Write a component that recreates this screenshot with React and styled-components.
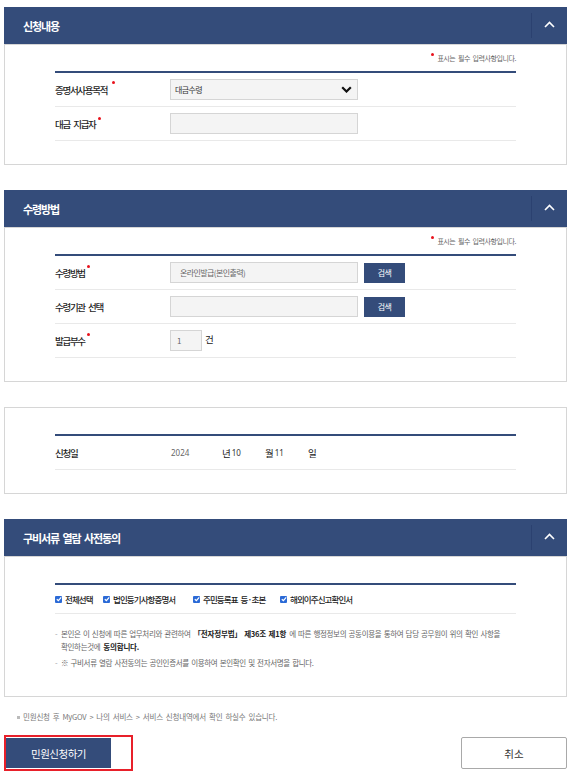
import styled, { createGlobalStyle } from "styled-components";

const GlobalStyle = createGlobalStyle`
  html, body {
    margin: 0;
    padding: 0;
    background: #fff;
  }
  body {
    font-family: "Noto Sans CJK KR", "Noto Sans", sans-serif;
    color: #222;
  }
`;

const NAVY = "#344c7a";

const ChevronUp = () => (
  <svg width="11" height="7" viewBox="0 0 11 7">
    <polyline points="1,6 5.5,1.5 10,6" fill="none" stroke="#fff" strokeWidth="1.6" />
  </svg>
);

const ChevronDown = () => (
  <svg width="11" height="7" viewBox="0 0 11 7">
    <polyline points="1.2,1.2 5.5,5.5 9.8,1.2" fill="none" stroke="#111" strokeWidth="2.2" />
  </svg>
);

const Check = () => (
  <svg width="6" height="6" viewBox="0 0 6 6">
    <polyline points="0.8,3.2 2.4,4.7 5.2,1.3" fill="none" stroke="#fff" strokeWidth="1.2" />
  </svg>
);

const Panel = ({ title, note = true, children }) => (
  <Section>
    {title && (
      <PanelHead>
        <h2>{title}</h2>
        <Toggle>
          <ChevronUp />
        </Toggle>
      </PanelHead>
    )}
    <PanelBody>
      <Required>
        {note && (
          <>
            <Dot $note />
            표시는 필수 입력사항입니다.
          </>
        )}
      </Required>
      {children}
    </PanelBody>
  </Section>
);

const App = () => {
  return (
    <Page>
      <GlobalStyle />
      <Panel title="신청내용">
        <FormTable>
          <Row>
            <Label>
              증명서사용목적 <Dot $top={-8} />
            </Label>
            <SelectBox>
              <span>대금수령</span>
              <ChevronDown />
            </SelectBox>
          </Row>
          <Row>
            <Label>
              대금 지급자<Dot $top={-6} />
            </Label>
            <Field />
          </Row>
        </FormTable>
      </Panel>

      <Panel title="수령방법">
        <FormTable>
          <Row>
            <Label>
              수령방법<Dot $top={-7} />
            </Label>
            <Field>온라인발급(본인출력)</Field>
            <SearchButton>검색</SearchButton>
          </Row>
          <Row>
            <Label>수령기관 선택</Label>
            <Field />
            <SearchButton>검색</SearchButton>
          </Row>
          <Row>
            <Label>
              발급부수<Dot $top={-7} />
            </Label>
            <Field $small>1</Field>
            <Unit>건</Unit>
          </Row>
        </FormTable>
      </Panel>

      <Panel note={false}>
        <FormTable>
          <Row>
            <Label>신청일</Label>
            <DatePart $w={52}>
              <Num>2024</Num>
            </DatePart>
            <DatePart $w={43}>
              년<Num $dark>10</Num>
            </DatePart>
            <DatePart $w={43}>
              월<Num $dark>11</Num>
            </DatePart>
            <DatePart>일</DatePart>
          </Row>
        </FormTable>
      </Panel>

      <Section>
        <PanelHead>
          <h2>구비서류 열람 사전동의</h2>
          <Toggle>
            <ChevronUp />
          </Toggle>
        </PanelHead>
        <PanelBody>
          <Required />
          <FormTable>
            <CheckRow>
              <CheckItem $w={48}>
                <Box>
                  <Check />
                </Box>
                전체선택
              </CheckItem>
              <CheckItem $w={90}>
                <Box>
                  <Check />
                </Box>
                법인등기사항증명서
              </CheckItem>
              <CheckItem $w={87}>
                <Box>
                  <Check />
                </Box>
                주민등록표 등·초본
              </CheckItem>
              <CheckItem>
                <Box>
                  <Check />
                </Box>
                해외이주신고확인서
              </CheckItem>
            </CheckRow>
          </FormTable>
          <Notes>
            <li>
              <NoteLine>
                <span>본인은 이 신청에 따른 업무처리와 관련하여</span>
                <b>「전자정부법」 제36조 제1항</b>
                <span>에 따른 행정정보의 공동이용을 통하여 담당 공무원이 위의 확인 사항을</span>
              </NoteLine>
              <NoteLine>
                <span>확인하는것에</span>
                <b>동의합니다.</b>
              </NoteLine>
            </li>
            <li>
              <NoteLine>
                <span>※ 구비서류 열람 사전동의는 공인인증서를 이용하여 본인확인 및 전자서명을 합니다.</span>
              </NoteLine>
            </li>
          </Notes>
        </PanelBody>
      </Section>

      <Guide>민원신청 후 MyGOV &gt; 나의 서비스 &gt; 서비스 신청내역에서 확인 하실수 있습니다.</Guide>

      <Actions>
        <Highlight>
          <SubmitButton>민원신청하기</SubmitButton>
        </Highlight>
        <CancelButton>취소</CancelButton>
      </Actions>
    </Page>
  );
};

const Page = styled.div`
  width: 563px;
  padding: 7px 0 0 4px;
`;

const Section = styled.section`
  margin-bottom: 25px;
`;

const PanelHead = styled.div`
  display: flex;
  align-items: center;
  height: 37px;
  background: ${NAVY};
  h2 {
    flex: 1;
    margin: 0;
    padding-left: 19px;
    color: #fff;
    font-size: 11px;
    font-weight: 700;
    letter-spacing: -1.1px;
    word-spacing: 2px;
  }
`;

const Toggle = styled.div`
  display: flex;
  align-items: center;
  justify-content: center;
  width: 35px;
  height: 25px;
  border-left: 1px solid #2b4170;
  svg {
    margin-top: -2px;
  }
`;

const PanelBody = styled.div`
  border: 1px solid #d6d6d6;
  padding: 0 50px 23px;
`;

const Required = styled.div`
  display: flex;
  align-items: center;
  justify-content: flex-end;
  height: 26px;
  font-size: 7px;
  letter-spacing: -0.45px;
  word-spacing: 1.5px;
  color: #666;
`;

const Dot = styled.span`
  display: inline-block;
  width: 3px;
  height: 3px;
  border-radius: 50%;
  background: #e8121c;
  position: relative;
  top: ${(p) => (p.$note ? -4 : p.$top || -6)}px;
  margin: ${(p) => (p.$note ? "0 3px 0 0" : "0 0 0 2px")};
  vertical-align: middle;
`;

const FormTable = styled.div`
  border-top: 2px solid ${NAVY};
`;

const Row = styled.div`
  display: flex;
  align-items: center;
  height: 33px;
  border-bottom: 1px solid #e9e9e9;
`;

const Label = styled.div`
  width: 115px;
  font-size: 9.5px;
  font-weight: 500;
  letter-spacing: -1.3px;
  word-spacing: 2.5px;
  color: #1e1e1e;
  white-space: nowrap;
`;

const Field = styled.div`
  box-sizing: border-box;
  display: flex;
  align-items: center;
  width: ${(p) => (p.$small ? 32 : 188)}px;
  height: 21px;
  padding-left: ${(p) => (p.$small ? 6 : 9)}px;
  background: #f4f4f4;
  border: 1px solid #d5d5d5;
  font-size: 8px;
  letter-spacing: -0.6px;
  color: #666;
`;

const SelectBox = styled(Field)`
  justify-content: space-between;
  padding: 0 5px 0 4px;
  color: #333;
`;

const SearchButton = styled.button`
  width: 41px;
  height: 20px;
  margin-left: 6px;
  padding: 0;
  border: 0;
  background: ${NAVY};
  color: #fff;
  font-family: inherit;
  font-size: 8px;
  letter-spacing: -0.6px;
`;

const Unit = styled.span`
  margin-left: 3px;
  margin-top: -4px;
  font-size: 9.5px;
  color: #222;
`;

const DatePart = styled.span`
  display: inline-flex;
  align-items: center;
  width: ${(p) => (p.$w ? `${p.$w}px` : "auto")};
  font-size: 9.5px;
  color: #222;
`;

const Num = styled.span`
  margin-left: 1px;
  font-family: "Noto Sans", sans-serif;
  font-size: 8px;
  color: ${(p) => (p.$dark ? "#333" : "#666")};
`;

const CheckRow = styled.div`
  display: flex;
  align-items: center;
  height: 28px;
  border-bottom: 1px solid #e9e9e9;
`;

const CheckItem = styled.label`
  display: flex;
  align-items: center;
  width: ${(p) => (p.$w ? `${p.$w}px` : "auto")};
  font-size: 8.5px;
  font-weight: 500;
  letter-spacing: -0.9px;
  word-spacing: 2px;
  color: #222;
  white-space: nowrap;
`;

const Box = styled.span`
  display: inline-flex;
  align-items: center;
  justify-content: center;
  width: 7px;
  height: 7px;
  margin-right: 3px;
  border-radius: 1px;
  background: #2b6ad6;
`;

const Notes = styled.ul`
  margin: 0;
  padding: 13px 0 2px;
  list-style: none;
  font-size: 7.5px;
  letter-spacing: -0.35px;
  word-spacing: 1px;
  line-height: 13px;
  color: #666;
  li {
    position: relative;
    padding-left: 6px;
    margin-bottom: 2.5px;
  }
  li::before {
    content: "-";
    position: absolute;
    left: 0;
    color: #999;
  }
  b {
    margin: 0 3px;
    font-weight: 700;
    letter-spacing: -0.2px;
    color: #222;
  }
`;

const NoteLine = styled.div`
  display: flex;
  white-space: nowrap;
`;

const Guide = styled.p`
  margin: -11px 0 0 13px;
  padding-left: 6px;
  position: relative;
  font-size: 7.5px;
  line-height: 12px;
  letter-spacing: -0.2px;
  word-spacing: 1.5px;
  color: #777;
  &::before {
    content: "";
    position: absolute;
    left: 0;
    top: 5px;
    width: 3px;
    height: 3px;
    background: #bbb;
  }
`;

const Actions = styled.div`
  display: flex;
  justify-content: space-between;
  align-items: center;
  margin-top: 12px;
`;

const Highlight = styled.div`
  display: flex;
  align-items: center;
  width: 125px;
  height: 32px;
  border: 2px solid #e8202a;
`;

const SubmitButton = styled.button`
  width: 105px;
  height: 30px;
  padding: 0;
  border: 0;
  background: ${NAVY};
  color: #fff;
  font-family: inherit;
  font-size: 10.5px;
  letter-spacing: -0.5px;
`;

const CancelButton = styled.button`
  width: 106px;
  height: 32px;
  padding: 0;
  background: #fff;
  border: 1px solid #a9a9a9;
  border-radius: 2px;
  color: #333;
  font-family: inherit;
  font-size: 10.5px;
`;

export default App;
